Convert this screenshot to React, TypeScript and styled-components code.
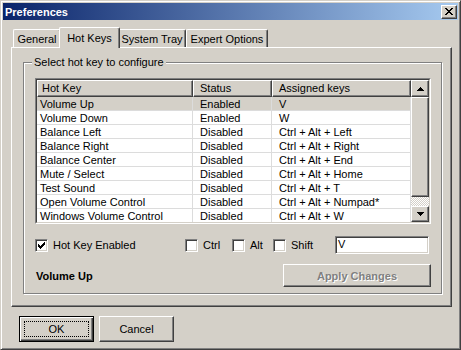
import React from 'react';
import styled, {createGlobalStyle} from 'styled-components';

const FACE = '#d4d0c8';
const SHADOW = '#808080';
const DARK = '#404040';
const HILITE = '#ffffff';
const GRID = '#dcdcdc';

const GlobalStyle = createGlobalStyle`
  html, body {
    margin: 0;
    padding: 0;
    background: ${FACE};
  }
  body {
    font-family: "Liberation Sans", Arial, sans-serif;
    font-size: 11px;
    color: #000;
  }
`;

// draws a small pixel glyph from rows of '#' and '.'
function Pixels({rows, color = '#000'}: {rows: string[]; color?: string}) {
  const w = rows[0].length;
  const h = rows.length;
  const rects: React.ReactElement[] = [];
  rows.forEach((r, y) =>
    r.split('').forEach((c, x) => {
      if (c === '#') rects.push(<rect key={`${x}-${y}`} x={x} y={y} width={1} height={1} />);
    })
  );
  return (
    <svg width={w} height={h} viewBox={`0 0 ${w} ${h}`} fill={color} shapeRendering='crispEdges'>
      {rects}
    </svg>
  );
}

const CLOSE = ['##....##', '.##..##.', '..####..', '...##...', '..####..', '.##..##.', '##....##'];
const CHECK = ['......#', '.....##', '#...###', '##.###.', '#####..', '.###...', '..#....'];
const UP = ['...#...', '..###..', '.#####.', '#######'];
const DOWN = ['#######', '.#####.', '..###..', '...#...'];

const Window = styled.div`
  box-sizing: border-box;
  width: 461px;
  height: 350px;
  display: flex;
  flex-direction: column;
  background: ${FACE};
  border: 1px solid;
  border-color: ${FACE} ${DARK} ${DARK} ${FACE};
  box-shadow: inset 1px 1px ${HILITE}, inset -1px -1px ${SHADOW};
  padding: 2px;
`;

const TitleBar = styled.div`
  height: 17px;
  display: flex;
  align-items: center;
  justify-content: space-between;
  padding: 0 1px 0 2px;
  background: linear-gradient(to right, #0a246a, #a6caf0);
`;

const Title = styled.span`
  color: #fff;
  font-weight: bold;
  font-size: 11px;
`;

const raised = `
  border: 1px solid;
  border-color: ${HILITE} ${DARK} ${DARK} ${HILITE};
  box-shadow: inset -1px -1px ${SHADOW};
  background: ${FACE};
`;

const CloseButton = styled.div`
  box-sizing: border-box;
  width: 16px;
  height: 14px;
  display: flex;
  align-items: center;
  justify-content: center;
  ${raised}
`;

const Body = styled.div`
  display: flex;
  flex-direction: column;
  padding: 7px 6px 0 8px;
`;

const TabRow = styled.div`
  display: flex;
  align-items: flex-end;
  height: 20px;
  padding-left: 2px;
`;

const Tab = styled.div<{$w: number; $active?: boolean}>`
  box-sizing: border-box;
  width: ${(p) => (p.$active ? p.$w + 4 : p.$w)}px;
  height: ${(p) => (p.$active ? 21 : 18)}px;
  margin: 0 ${(p) => (p.$active ? -2 : 0)}px ${(p) => (p.$active ? -1 : 0)}px;
  position: relative;
  z-index: ${(p) => (p.$active ? 2 : 1)};
  padding-top: ${(p) => (p.$active ? 4 : 3)}px;
  text-align: center;
  background: ${FACE};
  border-top: 1px solid ${HILITE};
  border-left: 1px solid ${HILITE};
  border-right: 1px solid ${DARK};
  border-top-left-radius: 2px;
  border-top-right-radius: 2px;
  box-shadow: inset -1px 0 ${SHADOW};
`;

const Panel = styled.div`
  box-sizing: border-box;
  height: 260px;
  display: flex;
  flex-direction: column;
  border: 1px solid;
  border-color: ${HILITE} ${DARK} ${DARK} ${HILITE};
  box-shadow: inset -1px -1px ${SHADOW};
  padding: 14px 9px 12px 11px;
`;

const Group = styled.div`
  position: relative;
  flex: 1;
  display: flex;
  flex-direction: column;
  border: 1px solid ${SHADOW};
  box-shadow: inset 1px 1px ${HILITE}, 1px 1px ${HILITE};
  padding: 15px 10px 0 11px;
`;

const Legend = styled.span`
  position: absolute;
  top: -7px;
  left: 8px;
  padding: 0 2px;
  line-height: 13px;
  background: ${FACE};
`;

const ListView = styled.div`
  box-sizing: border-box;
  width: 396px;
  height: 146px;
  border: 1px solid;
  border-color: ${SHADOW} ${HILITE} ${HILITE} ${SHADOW};
`;

const ListInner = styled.div`
  box-sizing: border-box;
  height: 100%;
  display: flex;
  overflow: hidden;
  background: #fff;
  border: 1px solid;
  border-color: ${DARK} ${FACE} ${FACE} ${DARK};
`;

const Table = styled.div`
  width: 374px;
  display: flex;
  flex-direction: column;
`;

const COLS = '156px 79px 139px';

const HeaderRow = styled.div`
  display: grid;
  grid-template-columns: ${COLS};
  height: 17px;
  flex-shrink: 0;
`;

const HeaderCell = styled.div<{$pad: number}>`
  box-sizing: border-box;
  height: 17px;
  line-height: 15px;
  padding-left: ${(p) => p.$pad}px;
  white-space: nowrap;
  ${raised}
`;

const Row = styled.div<{$selected?: boolean}>`
  display: grid;
  grid-template-columns: ${COLS};
  height: 14px;
  flex-shrink: 0;
  background: ${(p) => (p.$selected ? FACE : '#fff')};
`;

const Cell = styled.div<{$pad: number}>`
  box-sizing: border-box;
  height: 14px;
  line-height: 14px;
  padding-left: ${(p) => p.$pad}px;
  border-right: 1px solid ${GRID};
  border-bottom: 1px solid ${GRID};
  white-space: nowrap;
  overflow: hidden;
`;

const ScrollBar = styled.div`
  width: 18px;
  display: flex;
  flex-direction: column;
  background: repeating-conic-gradient(${HILITE} 0 25%, ${FACE} 0 50%) 0 0 / 2px 2px;
`;

const ScrollButton = styled.div<{$h: number}>`
  box-sizing: border-box;
  height: ${(p) => p.$h}px;
  flex-shrink: 0;
  display: flex;
  align-items: center;
  justify-content: center;
  ${raised}
`;

const Track = styled.div`
  flex: 1;
`;

const ChecksRow = styled.div`
  display: grid;
  grid-template-columns: 150px 47px 41px 62px 94px;
  align-items: center;
  height: 18px;
  margin-top: 12px;
`;

const CheckLabel = styled.label`
  display: flex;
  align-items: center;
  gap: 5px;
`;

const CheckBox = styled.span`
  box-sizing: border-box;
  width: 13px;
  height: 13px;
  display: flex;
  align-items: center;
  justify-content: center;
  background: #fff;
  border: 1px solid;
  border-color: ${SHADOW} ${HILITE} ${HILITE} ${SHADOW};
  box-shadow: inset 1px 1px ${DARK}, inset -1px -1px ${FACE};
`;

const TextField = styled.div`
  box-sizing: border-box;
  height: 18px;
  line-height: 15px;
  padding-left: 2px;
  background: #fff;
  border: 1px solid;
  border-color: ${SHADOW} ${HILITE} ${HILITE} ${SHADOW};
  box-shadow: inset 1px 1px ${DARK}, inset -1px -1px ${FACE};
`;

const BottomRow = styled.div`
  display: flex;
  align-items: center;
  justify-content: space-between;
  margin-top: 10px;
`;

const Selected = styled.span`
  font-weight: bold;
  padding-left: 1px;
`;

const Button = styled.div<{$w: number; $h: number; $disabled?: boolean; $default?: boolean}>`
  box-sizing: border-box;
  width: ${(p) => p.$w}px;
  height: ${(p) => p.$h}px;
  display: flex;
  align-items: center;
  justify-content: center;
  ${raised}
  ${(p) =>
    p.$default
      ? `border-color: #000; box-shadow: inset 1px 1px ${HILITE}, inset -1px -1px ${DARK}, inset -2px -2px ${SHADOW};`
      : `box-shadow: inset -1px -1px ${SHADOW}, inset 1px 1px ${FACE};`}
  color: ${(p) => (p.$disabled ? SHADOW : '#000')};
  font-weight: ${(p) => (p.$disabled ? 'bold' : 'normal')};
  text-shadow: ${(p) => (p.$disabled ? `1px 1px ${HILITE}` : 'none')};
`;

const Focus = styled.span`
  box-sizing: border-box;
  width: calc(100% - 8px);
  height: calc(100% - 8px);
  display: flex;
  align-items: center;
  justify-content: center;
  border: 1px dotted #000;
`;

const Footer = styled.div`
  display: flex;
  gap: 5px;
  padding: 9px 0 0 8px;
`;

const rows = [
  ['Volume Up', 'Enabled', 'V'],
  ['Volume Down', 'Enabled', 'W'],
  ['Balance Left', 'Disabled', 'Ctrl + Alt + Left'],
  ['Balance Right', 'Disabled', 'Ctrl + Alt + Right'],
  ['Balance Center', 'Disabled', 'Ctrl + Alt + End'],
  ['Mute / Select', 'Disabled', 'Ctrl + Alt + Home'],
  ['Test Sound', 'Disabled', 'Ctrl + Alt + T'],
  ['Open Volume Control', 'Disabled', 'Ctrl + Alt + Numpad*'],
  ['Windows Volume Control', 'Disabled', 'Ctrl + Alt + W'],
];

const tabs = [
  {label: 'General', w: 48},
  {label: 'Hot Keys', w: 57, active: true},
  {label: 'System Tray', w: 68},
  {label: 'Expert Options', w: 82},
];

function Check({label, checked}: {label: string; checked?: boolean}) {
  return (
    <CheckLabel>
      <CheckBox>{checked && <Pixels rows={CHECK} />}</CheckBox>
      {label}
    </CheckLabel>
  );
}

export default function App() {
  return (
    <>
      <GlobalStyle />
      <Window>
        <TitleBar>
          <Title>Preferences</Title>
          <CloseButton>
            <Pixels rows={CLOSE} />
          </CloseButton>
        </TitleBar>
        <Body>
          <TabRow>
            {tabs.map((t) => (
              <Tab key={t.label} $w={t.w} $active={t.active}>
                {t.label}
              </Tab>
            ))}
          </TabRow>
          <Panel>
            <Group>
              <Legend>Select hot key to configure</Legend>
              <ListView>
                <ListInner>
                  <Table>
                    <HeaderRow>
                      <HeaderCell $pad={4}>Hot Key</HeaderCell>
                      <HeaderCell $pad={6}>Status</HeaderCell>
                      <HeaderCell $pad={6}>Assigned keys</HeaderCell>
                    </HeaderRow>
                    {rows.map((r, i) => (
                      <Row key={r[0]} $selected={i === 0}>
                        <Cell $pad={3}>{r[0]}</Cell>
                        <Cell $pad={7}>{r[1]}</Cell>
                        <Cell $pad={7}>{r[2]}</Cell>
                      </Row>
                    ))}
                  </Table>
                  <ScrollBar>
                    <ScrollButton $h={17}>
                      <Pixels rows={UP} />
                    </ScrollButton>
                    <ScrollButton $h={100} />
                    <Track />
                    <ScrollButton $h={16}>
                      <Pixels rows={DOWN} />
                    </ScrollButton>
                  </ScrollBar>
                </ListInner>
              </ListView>
              <ChecksRow>
                <Check label='Hot Key Enabled' checked />
                <Check label='Ctrl' />
                <Check label='Alt' />
                <Check label='Shift' />
                <TextField>V</TextField>
              </ChecksRow>
              <BottomRow>
                <Selected>Volume Up</Selected>
                <Button $w={148} $h={23} $disabled>
                  Apply Changes
                </Button>
              </BottomRow>
            </Group>
          </Panel>
          <Footer>
            <Button $w={75} $h={26} $default>
              <Focus>OK</Focus>
            </Button>
            <Button $w={75} $h={26}>
              Cancel
            </Button>
          </Footer>
        </Body>
      </Window>
    </>
  );
}
